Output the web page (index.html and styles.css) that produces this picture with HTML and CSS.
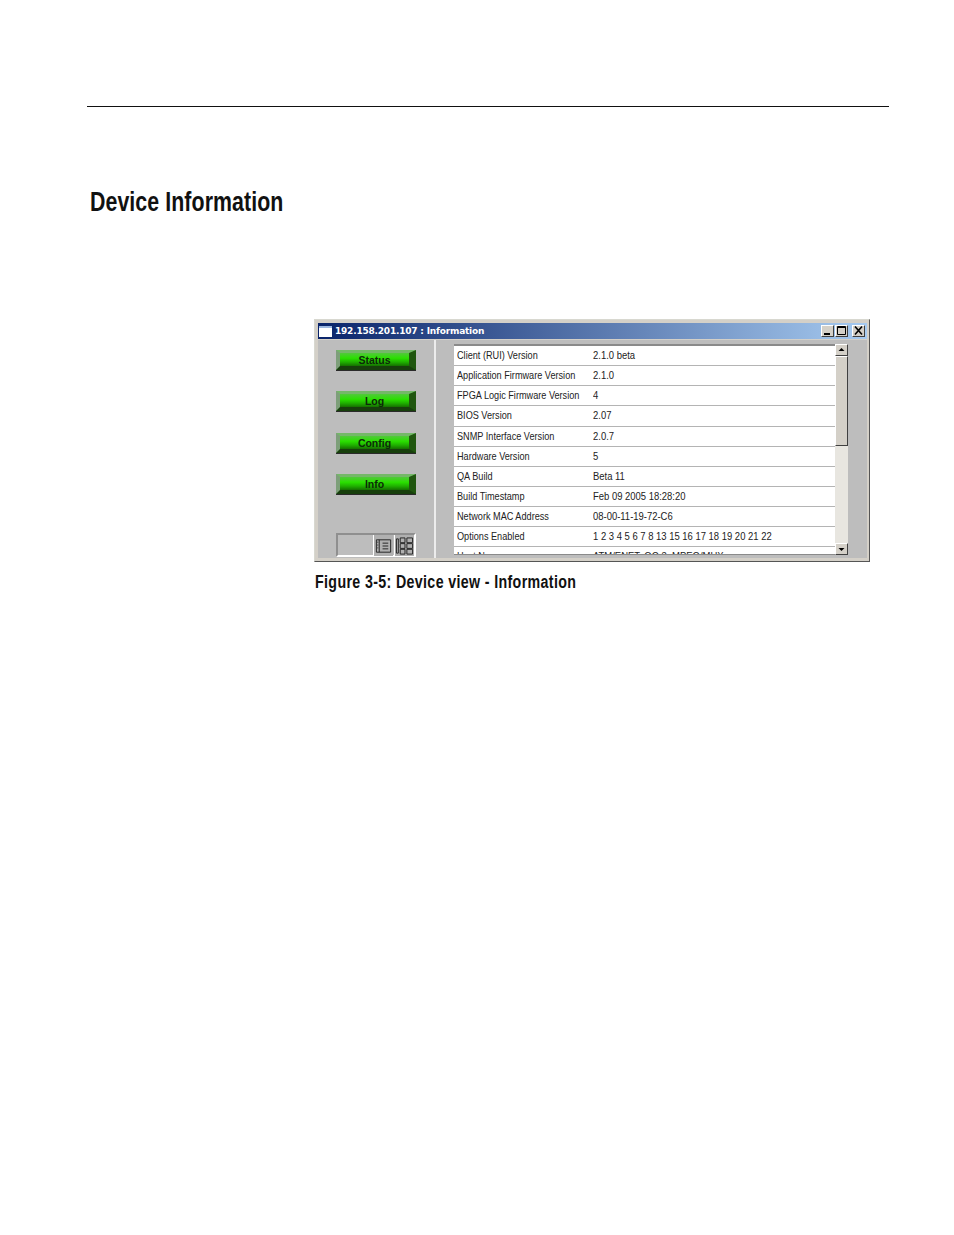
FILE: index.html
```html
<!DOCTYPE html>
<html lang="en">
<head>
<meta charset="utf-8">
<title>Device Information</title>
<link rel="stylesheet" href="styles.css">
</head>
<body>
<div class="page">
  <hr class="rule">
  <h1 class="heading">Device Information</h1>
  <figure class="figure">
    <div class="window">
      <div class="titlebar">
        <span class="app-icon"></span>
        <span class="title">192.158.201.107 : Information</span>
        <span class="controls">
          <span class="ctl"><svg viewBox="0 0 13 11" width="13" height="11"><path d="M3 9h6" stroke="#000" stroke-width="2"/></svg></span>
          <span class="ctl"><svg viewBox="0 0 13 11" width="13" height="11"><path d="M2.500 1.500h8v8h-8zM2.500 2.500h8" fill="none" stroke="#000"/></svg></span>
          <span class="ctl ctl-close"><svg viewBox="0 0 13 11" width="13" height="11"><path d="M3 1.500l7 8M10 1.500l-7 8" stroke="#000" stroke-width="1.600" fill="none"/></svg></span>
        </span>
      </div>
      <div class="body">
        <nav class="side">
          <div class="btn">Status</div>
          <div class="btn">Log</div>
          <div class="btn">Config</div>
          <div class="btn">Info</div>
          <div class="tools">
            <span class="tool"><svg viewBox="0 0 20 18" width="20" height="18"><path d="M2.500 2.500h15v13h-15zM5.500 2.500v13M9 6h6M9 9h6M9 12h6M3.500 5h1M3.500 8h1M3.500 11h1" fill="none" stroke="#222"/></svg></span>
            <span class="tool"><svg viewBox="0 0 20 20" width="20" height="20"><path d="M1.500 2.500h2v15h-2zM5.500 1.500h5v5h-5zM12.500 1.500h6v5h-6zM5.500 7.500h5v5h-5zM12.500 7.500h6v5h-6zM5.500 13.500h5v5h-5zM12.500 13.500h6v5h-6z" fill="none" stroke="#222"/></svg></span>
          </div>
        </nav>
        <div class="divider"></div>
        <div class="list-pane">
          <div class="list">
            <div class="rows">
              <div class="row"><span class="key">Client (RUI) Version</span><span class="val">2.1.0 beta</span></div>
              <div class="row"><span class="key">Application Firmware Version</span><span class="val">2.1.0</span></div>
              <div class="row"><span class="key">FPGA Logic Firmware Version</span><span class="val">4</span></div>
              <div class="row"><span class="key">BIOS Version</span><span class="val">2.07</span></div>
              <div class="row"><span class="key">SNMP Interface Version</span><span class="val">2.0.7</span></div>
              <div class="row"><span class="key">Hardware Version</span><span class="val">5</span></div>
              <div class="row"><span class="key">QA Build</span><span class="val">Beta 11</span></div>
              <div class="row"><span class="key">Build Timestamp</span><span class="val">Feb 09 2005 18:28:20</span></div>
              <div class="row"><span class="key">Network MAC Address</span><span class="val">08-00-11-19-72-C6</span></div>
              <div class="row"><span class="key">Options Enabled</span><span class="val">1 2 3 4 5 6 7 8 13 15 16 17 18 19 20 21 22</span></div>
              <div class="row"><span class="key">Host Name</span><span class="val">ATM/ENET, OC-3, MPEG/MUX</span></div>
            </div>
            <div class="scrollbar">
              <span class="arrow arrow-top"><svg viewBox="0 0 13 12" width="13" height="12"><path d="M6.500 4l-3 3h6z" fill="#000"/></svg></span>
              <span class="thumb"></span>
              <span class="track"></span>
              <span class="arrow"><svg viewBox="0 0 13 12" width="13" height="12"><path d="M6.500 8l-3-3h6z" fill="#000"/></svg></span>
            </div>
          </div>
        </div>
      </div>
    </div>
    <figcaption class="caption">Figure 3-5: Device view - Information</figcaption>
  </figure>
</div>
</body>
</html>
```
FILE: styles.css
```css
* { box-sizing: border-box; }
html, body { margin: 0; background: #fff; }
.page { width: 954px; height: 1235px; padding: 106px 65px 0 87px; font-family: "Liberation Sans", Arial, sans-serif; color: #111; overflow: hidden; }
.rule { margin: 0; border: 0; height: 1px; background: #111; }
.heading { margin: 67px 0 0 3px; font-size: 27px; line-height: 56px; font-weight: 700; height: 56px; letter-spacing: .1px; white-space: nowrap; transform: scaleX(.79); transform-origin: left center; }
.figure { margin: 89px 19px 0 227px; }
.window { height: 243px; padding: 3px 2px 3px 3px; background: #d4d0c8; border: 1px solid; border-color: #d8d8d0 #555 #555 #d8d8d0; }
.titlebar { height: 16px; display: flex; align-items: center; padding: 0 2px 0 1px; background: linear-gradient(90deg, #0a246a, #a6caf0); }
.app-icon { width: 13px; height: 11px; background: #fff; border-top: 2px solid #9db8e0; margin-right: 3px; }
.title { font-family: "DejaVu Sans", sans-serif; font-size: 9px; font-weight: 700; color: #fff; white-space: nowrap; letter-spacing: -.2px; }
.controls { margin-left: auto; display: flex; gap: 1px; }
.ctl { width: 13px; height: 12px; background: #d4d0c8; border: 1px solid; border-color: #fff #404040 #404040 #fff; display: flex; }
.ctl svg { flex: none; margin: -1px 0 0 -1px; }
.ctl-close { margin-left: 3px; }
.body { display: flex; height: 219px; background: #bdbdbd; border-top: 1px solid #d4d0c8; }
.side { width: 116px; padding: 10px 0 0 18px; display: flex; flex-direction: column; }
.btn { width: 80px; height: 20px; margin-bottom: 21.3px; background: linear-gradient(180deg, #52c83c 0, #2ae000 40%, #1fb000 70%, #157000 100%); border-style: solid; border-width: 3px 7px 4px 4px; border-color: #74b868 #20560f #173f0c #7d9f79; font: 700 10.5px/15px "Liberation Sans", Arial, sans-serif; color: #0c2a08; white-space: nowrap; display: flex; justify-content: center; box-shadow: 0 1px 0 #2a2a2a; }
.tools { margin-top: auto; margin-bottom: 1px; width: 80px; height: 24px; display: flex; justify-content: flex-end; gap: 1px; background: #bdbdbd; border: 2px solid; border-color: #8f8f8f #fff #fff #8f8f8f; }
.tool { width: 20px; height: 21px; background: #b0b0b0; border-left: 1px solid #fff; display: flex; align-items: center; justify-content: center; }
.divider { width: 2px; background: #ececec; }
.list-pane { flex: 1; padding: 4px 19px 4px 18px; }
.list { display: flex; height: 211px; }
.rows { width: 381px; height: 211px; overflow: hidden; background: #fff; border-top: 2px solid #8a8a8a; border-bottom: 1px solid #8a8a8a; }
.row { height: 20.15px; display: flex; align-items: center; padding: 0 0 1px 3px; border-bottom: 1px solid #b4b4b4; font: 10.5px/14px "Liberation Sans", Arial, sans-serif; color: #222; white-space: nowrap; }
.key { width: 136px; flex: none; display: block; transform: scaleX(.87); transform-origin: left center; }
.val { display: block; transform: scaleX(.9); transform-origin: left center; }
.scrollbar { width: 13px; display: flex; flex-direction: column; background: #e8e6e0; }
.arrow { height: 12px; background: #d4d0c8; border: 1px solid; border-color: #fff #404040 #404040 #fff; display: flex; flex: none; }
.arrow svg { flex: none; margin: -1px 0 0 -1px; }
.thumb { height: 90px; flex: none; background: #d4d0c8; border: 1px solid; border-color: #fff #404040 #404040 #fff; }
.track { flex: 1; }
.caption { margin-top: 10px; margin-left: 1px; font-size: 18px; line-height: 20px; font-weight: 700; letter-spacing: .45px; white-space: nowrap; transform: scaleX(.79); transform-origin: left center; }
```
